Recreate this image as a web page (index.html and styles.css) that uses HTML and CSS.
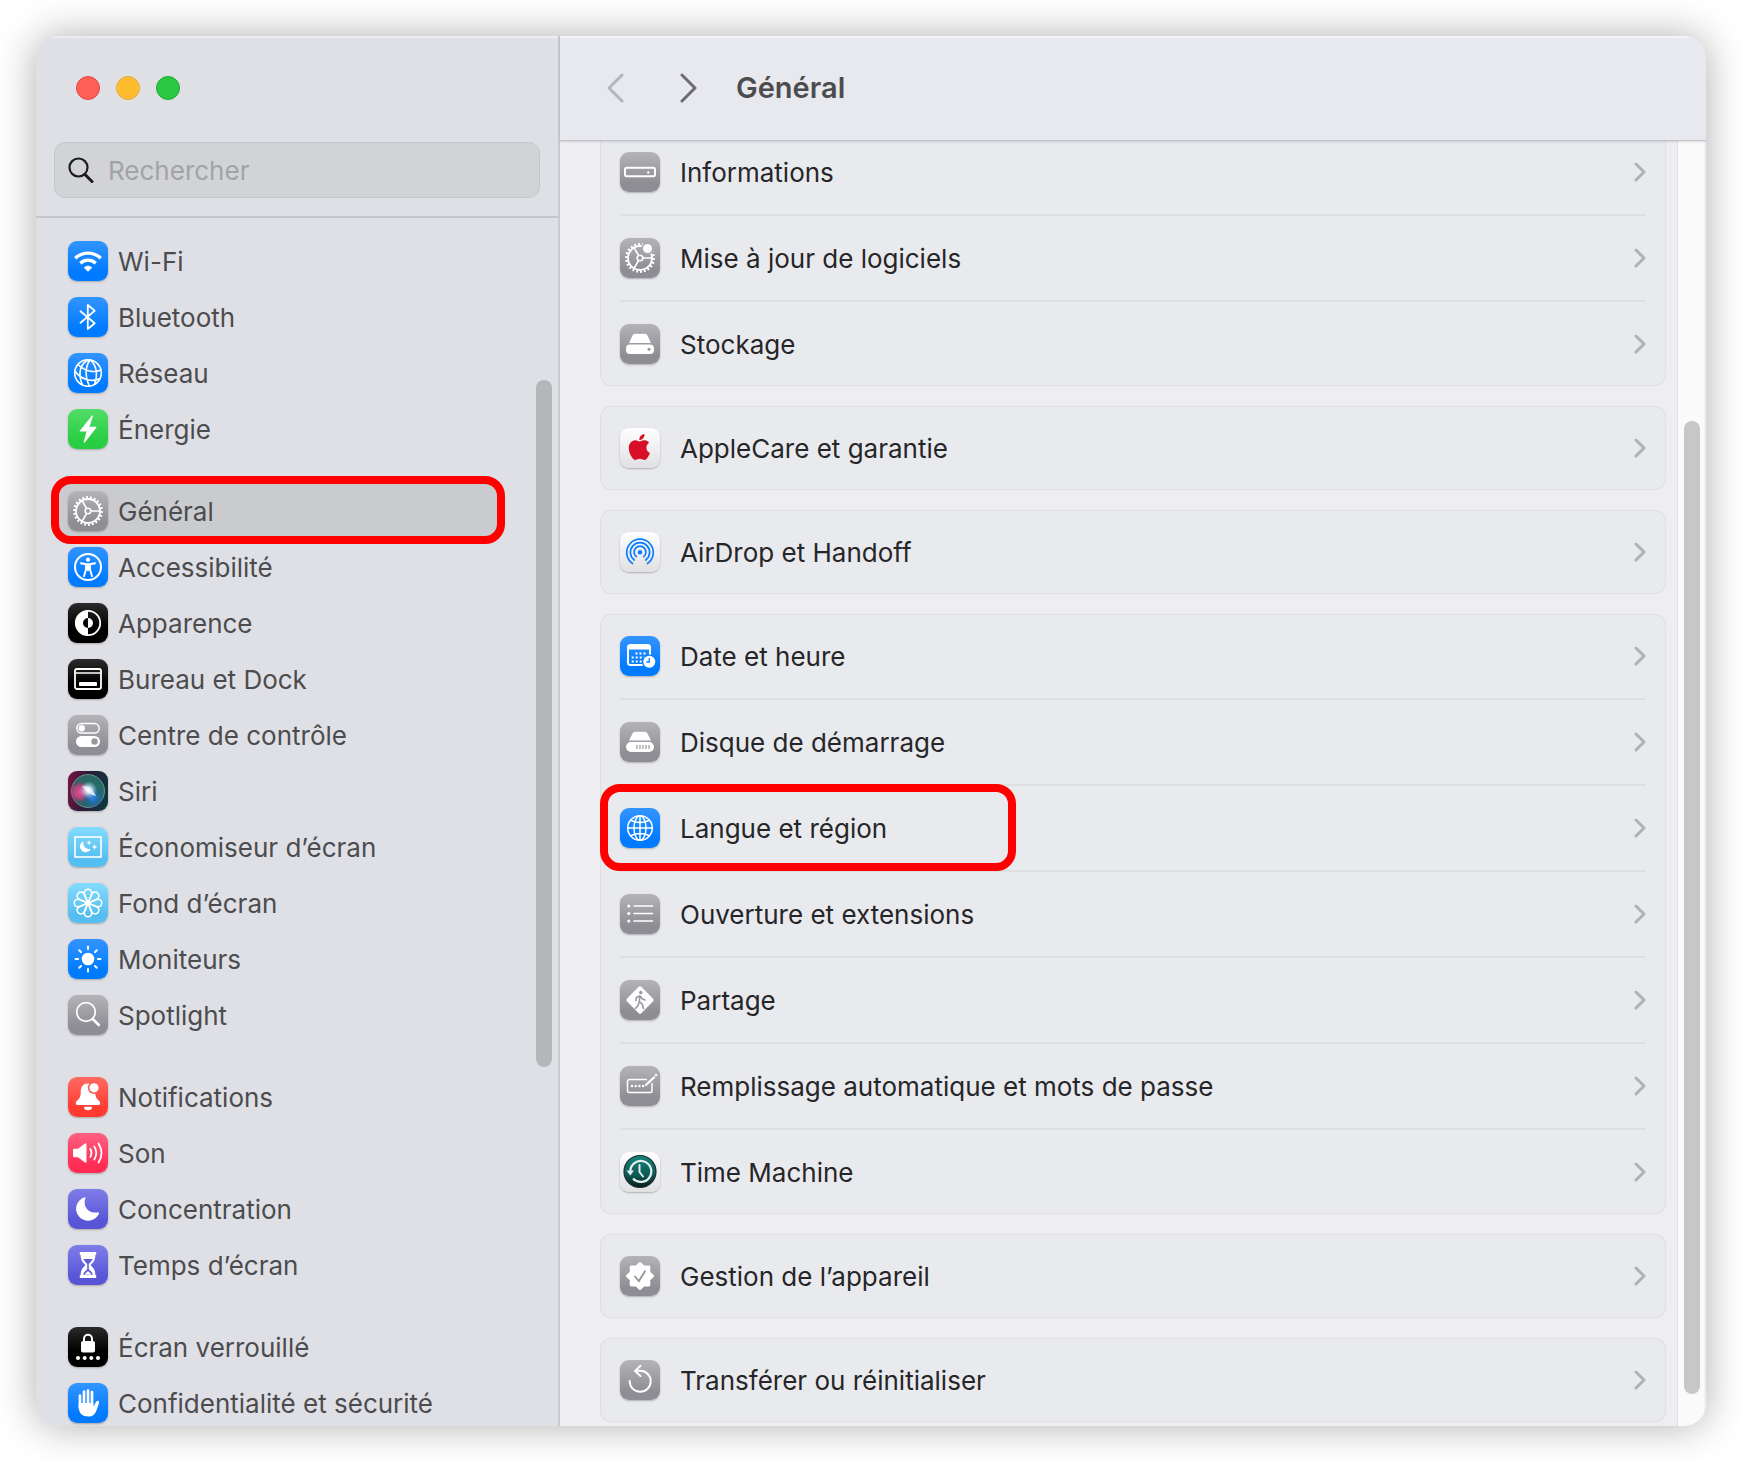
FILE: index.html
```html
<!DOCTYPE html>
<html lang="fr">
<head>
    <meta charset="UTF-8">
    <meta name="viewport" content="width=device-width, initial-scale=1.0">
    <title>Réglages Système - Général</title>
    <link rel="stylesheet" href="styles.css">
</head>
<body>
    <!-- Shared shapes -->
    <svg class="defs" aria-hidden="true">
        <symbol id="chevron" viewBox="0 0 12 20">
            <path d="M2 2l8 8-8 8" fill="none" stroke="currentColor" stroke-width="3" stroke-linecap="round" stroke-linejoin="round"/>
        </symbol>
        <symbol id="gear" viewBox="0 0 40 40">
            <g fill="none" stroke="currentColor">
                <circle cx="20" cy="20" r="13.7" stroke-width="2.4" pathLength="44" stroke-dasharray="1 1"/>
                <circle cx="20" cy="20" r="12" stroke-width="1.8"/>
                <circle cx="20" cy="20" r="2.8" stroke-width="1.6"/>
                <path d="M23 20h9M18.500 17.400L14 9.600M18.500 22.600L14 30.400" stroke-width="1.7"/>
            </g>
        </symbol>
    </svg>

    <div class="window">
        <aside class="sidebar">
            <div class="sidebar-header">
                <div class="traffic-lights">
                    <button class="light close" aria-label="Fermer"></button>
                    <button class="light minimize" aria-label="Réduire"></button>
                    <button class="light zoom" aria-label="Agrandir"></button>
                </div>
                <label class="search">
                    <svg class="search-icon" viewBox="0 0 26 28" aria-hidden="true"><g fill="none" stroke="currentColor" stroke-width="2.2" stroke-linecap="round"><circle cx="10.500" cy="11.500" r="9"/><path d="M17 18.500l7 7" stroke-width="3"/></g></svg>
                    <input type="search" placeholder="Rechercher" aria-label="Rechercher">
                </label>
            </div>

            <nav class="sidebar-body">
                <ul class="nav-group">
                    <li><a class="nav-item" href="#wifi"><svg class="icon blue" viewBox="0 0 40 40"><path d="M7.300 17.200a18.300 18.300 0 0 1 25.400 0M12.300 22.200a11.300 11.300 0 0 1 15.400 0" fill="none" stroke="#fff" stroke-width="3.300"/><path d="M20 30.800l-4.300-4.300q4.300-3.600 8.600 0z" fill="#fff"/></svg><span>Wi-Fi</span></a></li>
                    <li><a class="nav-item" href="#bluetooth"><svg class="icon blue" viewBox="0 0 40 40"><path d="M12.500 14.300L26.700 26.200 19.800 32V8l6.900 5.800L12.500 25.700" fill="none" stroke="#fff" stroke-width="1.800" stroke-linejoin="round" stroke-linecap="round"/></svg><span>Bluetooth</span></a></li>
                    <li><a class="nav-item" href="#reseau"><svg class="icon blue" viewBox="0 0 40 40"><g fill="none" stroke="#fff" stroke-width="1.600"><circle cx="20" cy="20" r="13.300"/><path d="M21 6.700C12 10 9.500 21 14.500 32M22 6.700C17.500 13 16.500 24 21.500 33M22 6.700C28 11.500 30.500 21 26.500 31.500M10 11.500C17 18.500 26 20 33 17M7 18C12 26.500 25 29.500 32 25.500"/></g></svg><span>Réseau</span></a></li>
                    <li><a class="nav-item" href="#energie"><svg class="icon green" viewBox="0 0 40 40"><path d="M24.300 6.300L11.800 21.700q-.6.900.4.900h6.300L15.700 33q.2 1.300 1.300.3L28.300 18.700q.5-1-.5-1h-6.300l3.500-10.800q0-1-.7-.6z" fill="#fff"/></svg><span>Énergie</span></a></li>
                </ul>
                <ul class="nav-group">
                    <li class="annotated"><a class="nav-item selected" href="#general" aria-current="page"><svg class="icon gray" viewBox="0 0 40 40"><use href="#gear"/></svg><span>Général</span></a></li>
                    <li><a class="nav-item" href="#accessibilite"><svg class="icon blue" viewBox="0 0 40 40"><circle cx="20" cy="20" r="13" fill="none" stroke="#fff" stroke-width="2"/><circle cx="20" cy="12.700" r="2.100" fill="#fff"/><path d="M13 16.300l5 .9v5l-2 7M27 16.300l-5 .9v5l2 7M17.700 17.300h4.600M20 18v5" fill="none" stroke="#fff" stroke-width="1.900" stroke-linecap="round" stroke-linejoin="round"/><path d="M17.500 17h5v6.500h-5z" fill="#fff"/></svg><span>Accessibilité</span></a></li>
                    <li><a class="nav-item" href="#apparence"><svg class="icon black" viewBox="0 0 40 40"><circle cx="20" cy="20" r="12.200" fill="none" stroke="#fff" stroke-width="1.800"/><path d="M20 7.500a12.500 12.500 0 0 0 0 25V25a5 5 0 0 1 0-10zM20 15a5 5 0 0 1 0 10z" fill="#fff"/></svg><span>Apparence</span></a></li>
                    <li><a class="nav-item" href="#dock"><svg class="icon black" viewBox="0 0 40 40"><rect x="7" y="10" width="26" height="20" rx="2" fill="none" stroke="#fff" stroke-width="1.800"/><path d="M7 14h26" stroke="#fff" stroke-width="1.400"/><rect x="11" y="23" width="18" height="4" rx="1" fill="#fff"/></svg><span>Bureau et Dock</span></a></li>
                    <li><a class="nav-item" href="#controle"><svg class="icon gray" viewBox="0 0 40 40"><rect x="8.800" y="8.600" width="22.400" height="9.400" rx="4.700" fill="none" stroke="#fff" stroke-width="1.500"/><circle cx="13.700" cy="13.300" r="3.200" fill="#fff"/><rect x="8" y="21" width="24" height="11" rx="5.500" fill="#fff"/><circle cx="26.500" cy="26.500" r="3.200" fill="#98979c"/></svg><span>Centre de contrôle</span></a></li>
                    <li><a class="nav-item" href="#siri"><svg class="icon siri" viewBox="0 0 40 40">
                        <defs>
                            <radialGradient id="siri-core"><stop offset="0" stop-color="#fff"/><stop offset=".35" stop-color="#e6f4ff" stop-opacity=".8"/><stop offset="1" stop-color="#8fd0ff" stop-opacity="0"/></radialGradient>
                            <radialGradient id="siri-blue"><stop offset="0" stop-color="#2a86f0"/><stop offset="1" stop-color="#1a4fb8" stop-opacity="0"/></radialGradient>
                            <radialGradient id="siri-pink"><stop offset="0" stop-color="#ec4f95"/><stop offset=".6" stop-color="#c8407c" stop-opacity=".8"/><stop offset="1" stop-color="#a02a70" stop-opacity="0"/></radialGradient>
                        </defs>
                        <circle cx="20" cy="20" r="16.500" fill="#2a8073" fill-opacity=".75" stroke="#86a9ae" stroke-opacity=".7"/>
                        <circle cx="12" cy="21" r="11" fill="url(#siri-pink)"/>
                        <circle cx="25" cy="27" r="11" fill="url(#siri-blue)"/>
                        <path d="M14 15c8 0 10 3 14 10-8-2-10-5-14-10z" fill="#fff" fill-opacity=".85"/>
                        <circle cx="20.500" cy="19" r="9" fill="url(#siri-core)"/>
                    </svg><span>Siri</span></a></li>
                    <li><a class="nav-item" href="#economiseur"><svg class="icon sky" viewBox="0 0 40 40"><rect x="7" y="10" width="26" height="20" fill="none" stroke="#fff" stroke-width="1.600"/><path d="M15.300 14.300a6.300 6.300 0 0 0 7.500 7.600 5.700 5.700 0 1 1-7.500-7.600z" fill="#fff"/><path d="M21 13l.7 2 2 .7-2 .7-.7 2-.7-2-2-.7 2-.7zM26.500 17l.8 2.200 2.200.8-2.200.8-.8 2.200-.8-2.200-2.200-.8 2.200-.8z" fill="#fff"/></svg><span>Économiseur d’écran</span></a></li>
                    <li><a class="nav-item" href="#fond"><svg class="icon sky" viewBox="0 0 40 40"><g fill="none" stroke="#fff" stroke-width="1.600">
                        <path id="petal" d="M20 19C18.500 16 16.200 13.500 16.200 10a3.800 3.800 0 0 1 7.600 0C23.800 13.500 21.500 16 20 19z"/>
                        <use href="#petal" transform="rotate(45 20 20)"/><use href="#petal" transform="rotate(90 20 20)"/><use href="#petal" transform="rotate(135 20 20)"/><use href="#petal" transform="rotate(180 20 20)"/><use href="#petal" transform="rotate(225 20 20)"/><use href="#petal" transform="rotate(270 20 20)"/><use href="#petal" transform="rotate(315 20 20)"/>
                    </g></svg><span>Fond d’écran</span></a></li>
                    <li><a class="nav-item" href="#moniteurs"><svg class="icon blue" viewBox="0 0 40 40"><circle cx="20" cy="20" r="6.300" fill="#fff"/><path d="M20 7.500v2.600M20 29.900v2.600M7.500 20h2.600M29.900 20h2.600M11.200 11.200l1.800 1.800M27 27l1.800 1.800M28.800 11.200L27 13M13 27l-1.800 1.800" stroke="#fff" stroke-width="2" stroke-linecap="round"/></svg><span>Moniteurs</span></a></li>
                    <li><a class="nav-item" href="#spotlight"><svg class="icon gray" viewBox="0 0 40 40"><g fill="none" stroke="#fff" stroke-linecap="round"><circle cx="18" cy="17" r="9.300" stroke-width="1.700"/><path d="M24.800 24l6 6" stroke-width="2.500"/></g></svg><span>Spotlight</span></a></li>
                </ul>
                <ul class="nav-group">
                    <li><a class="nav-item" href="#notifications"><svg class="icon red" viewBox="0 0 40 40"><path d="M20 6.500c-4.500 0-7.200 3.200-7.200 7.500 0 6-1.300 7.500-3.800 9.700-2 2.100-1.200 4.300 1 4.300h20c2.200 0 3-2.200 1-4.300-2.500-2.200-3.800-3.700-3.800-9.700 0-4.300-2.700-7.500-7.200-7.500zM16 29.800h8a4 3.500 0 0 1-8 0z" fill="#fff"/><circle cx="26" cy="10.800" r="6.200" fill="#ff5c53"/><circle cx="26" cy="10.800" r="4.600" fill="#fff"/></svg><span>Notifications</span></a></li>
                    <li><a class="nav-item" href="#son"><svg class="icon pink" viewBox="0 0 40 40"><path d="M6 15.800q-1 .2-1 1.200v6q0 1 1 1.200h4l7 5.200q1.500.7 1.500-.7V11.300q0-1.400-1.500-.7l-7 5.200z" fill="#fff"/><path d="M22.300 16q2.300 4 0 8M26.300 13.500q4 6.500 0 13M30.500 10.500q6 9.500 0 19" fill="none" stroke="#fff" stroke-width="1.800" stroke-linecap="round"/></svg><span>Son</span></a></li>
                    <li><a class="nav-item" href="#concentration"><svg class="icon indigo" viewBox="0 0 40 40"><path d="M16.500 8.300c.8-.3 1.200.1.900.9-3 8.300 3.200 15.800 12.800 14.200.9-.1 1.200.4.900 1.200A12 12 0 1 1 16.500 8.300z" fill="#fff"/></svg><span>Concentration</span></a></li>
                    <li><a class="nav-item" href="#temps"><svg class="icon indigo" viewBox="0 0 40 40"><path d="M12.500 7h15q.8 0 .8.900v1q0 .8-1 1C27.300 15.500 25.500 17 22.500 20c3 3 4.800 4.500 4.800 10.100q1 .2 1 1v1q0 .9-.8.900h-15q-.8 0-.8-.9v-1q0-.8 1-1C12.700 24.500 14.500 23 17.500 20c-3-3-4.800-4.500-4.800-10.100q-1-.2-1-1v-1q0-.9.800-.9z" fill="#fff"/><path d="M15.200 14h9.600q-1.500 2.500-4 5v4.500q0 1 1 1.700 2.500 1.500 3.200 4.500h-10q.7-3 3.200-4.500 1-.7 1-1.700V19q-2.500-2.500-4-5z" fill="#6260d9"/><path d="M20 26l3.600 3.500h-7.200z" fill="#fff"/></svg><span>Temps d’écran</span></a></li>
                </ul>
                <ul class="nav-group">
                    <li><a class="nav-item" href="#verrouille"><svg class="icon black" viewBox="0 0 40 40"><rect x="13" y="14" width="14" height="11.500" rx="2" fill="#fff"/><path d="M16 15v-3.300a4 4 0 0 1 8 0V15" fill="none" stroke="#fff" stroke-width="2"/><g fill="#fff"><circle cx="10" cy="31" r="2"/><circle cx="16.700" cy="31" r="2"/><circle cx="23.300" cy="31" r="2"/><circle cx="30" cy="31" r="2"/></g></svg><span>Écran verrouillé</span></a></li>
                    <li><a class="nav-item" href="#confidentialite"><svg class="icon blue" viewBox="0 0 40 40"><path d="M12 12.500V25M16 8.500V22M20 7.500V22M24 9V22" stroke="#fff" stroke-width="2.700" stroke-linecap="round"/><path d="M10.650 20h14.700v3.500q1.200-1.200 2.400-4.200.8-1.900 2.400-1.600 1.500.5.900 2.300l-2.500 7.200C27 31.500 24.500 33.500 20.500 33.500c-6 0-9.850-3-9.850-10z" fill="#fff"/></svg><span>Confidentialité et sécurité</span></a></li>
                </ul>
            </nav>
            <div class="sidebar-thumb"></div>
        </aside>

        <main class="content">
            <header class="toolbar">
                <button class="nav-button back" aria-label="Précédent" disabled><svg viewBox="0 0 18 30"><path d="M16 2L3 15l13 13"/></svg></button>
                <button class="nav-button" aria-label="Suivant"><svg viewBox="0 0 18 30"><path d="M2 2l13 13L2 28"/></svg></button>
                <h1>Général</h1>
            </header>

            <div class="pane">
                <div class="cards">
                    <ul class="card">
                        <li><a class="row" href="#informations"><svg class="icon gray" viewBox="0 0 40 40"><rect x="5" y="15.800" width="30" height="8.400" rx="1.800" fill="none" stroke="#fff" stroke-width="2"/><circle cx="28.300" cy="20.500" r="1.200" fill="#fff"/></svg><span>Informations</span><svg class="chevron"><use href="#chevron"/></svg></a></li>
                        <li><a class="row" href="#mise-a-jour"><svg class="icon gray" viewBox="0 0 40 40"><use href="#gear"/><circle cx="27.500" cy="10.500" r="6.300" fill="#a9a8ad"/><circle cx="27.500" cy="10.500" r="4.500" fill="#fff"/></svg><span>Mise à jour de logiciels</span><svg class="chevron"><use href="#chevron"/></svg></a></li>
                        <li><a class="row" href="#stockage"><svg class="icon gray" viewBox="0 0 40 40"><path d="M12.500 11.500q.7-1.700 2.500-1.700h10q1.800 0 2.500 1.700L31 19H9zM10 20.500h20a4 4 0 0 1 4 4v1.500a4 4 0 0 1-4 4H10a4 4 0 0 1-4-4v-1.500a4 4 0 0 1 4-4z" fill="#fff"/><circle cx="29" cy="25.300" r="1.500" fill="#98979c"/></svg><span>Stockage</span><svg class="chevron"><use href="#chevron"/></svg></a></li>
                    </ul>

                    <ul class="card">
                        <li><a class="row" href="#applecare"><svg class="icon white" viewBox="0 0 40 40"><path transform="translate(6.400 6) scale(1.080)" d="M12.152 6.896c-.948 0-2.415-1.078-3.960-1.040-2.040.027-3.910 1.183-4.961 3.014-2.117 3.675-.546 9.103 1.519 12.090 1.013 1.454 2.208 3.090 3.792 3.039 1.520-.065 2.090-.987 3.935-.987 1.831 0 2.350.987 3.960.948 1.637-.026 2.676-1.480 3.676-2.948 1.156-1.688 1.636-3.325 1.662-3.415-.039-.013-3.182-1.221-3.220-4.857-.026-3.040 2.480-4.494 2.597-4.559-1.429-2.090-3.623-2.324-4.390-2.376-2-.156-3.675 1.090-4.610 1.090zM15.530 3.830c.843-1.012 1.400-2.427 1.245-3.830-1.207.052-2.662.805-3.532 1.818-.780.896-1.454 2.338-1.273 3.714 1.338.104 2.715-.688 3.559-1.701" fill="#d70f26"/></svg><span>AppleCare et garantie</span><svg class="chevron"><use href="#chevron"/></svg></a></li>
                    </ul>

                    <ul class="card">
                        <li><a class="row" href="#airdrop"><svg class="icon white" viewBox="0 0 40 40"><g fill="none" stroke="#0a7cff" stroke-width="1.700" stroke-linecap="round"><path d="M12.500 31.500a13.300 13.300 0 1 1 15 0M14.300 28a9.600 9.600 0 1 1 11.400 0M16.300 24.700a5.900 5.900 0 1 1 7.400 0"/></g><circle cx="20" cy="20.300" r="2.200" fill="#0a7cff"/></svg><span>AirDrop et Handoff</span><svg class="chevron"><use href="#chevron"/></svg></a></li>
                    </ul>

                    <ul class="card">
                        <li><a class="row" href="#date"><svg class="icon blue" viewBox="0 0 40 40"><rect x="8" y="9" width="22" height="20" rx="2.500" fill="none" stroke="#fff" stroke-width="2"/><path d="M8 9h22v4.500H8z" fill="#fff"/><path d="M15.500 17.500h11.500M11.700 21.500h15M11.700 25.500h11" stroke="#fff" stroke-width="2" stroke-dasharray="2 2"/><circle cx="29.300" cy="25.800" r="7.300" fill="#0b80ff"/><circle cx="29.300" cy="25.800" r="6" fill="#fff"/><path d="M29.300 22v4h-3" fill="none" stroke="#0b80ff" stroke-width="1.300"/></svg><span>Date et heure</span><svg class="chevron"><use href="#chevron"/></svg></a></li>
                        <li><a class="row" href="#disque"><svg class="icon gray" viewBox="0 0 40 40"><path d="M12.500 11.500q.7-1.700 2.500-1.700h10q1.800 0 2.500 1.700L31 18.500H9zM11 20h18a5 5 0 0 1 0 10H11a5 5 0 0 1 0-10z" fill="#fff"/><path d="M17 23v4M20 23v4M23 23v4M26 23v4M29 23v4" stroke="#98979c" stroke-width="1.200"/></svg><span>Disque de démarrage</span><svg class="chevron"><use href="#chevron"/></svg></a></li>
                        <li class="annotated"><a class="row" href="#langue"><svg class="icon blue" viewBox="0 0 40 40"><g fill="none" stroke="#fff" stroke-width="1.500"><circle cx="20" cy="20" r="12.300"/><ellipse cx="20" cy="20" rx="6" ry="12.300"/><path d="M20 7.700v24.600M7.700 20h24.600M10.500 12.300q9.500 4.500 19 0M10.500 27.700q9.500-4.500 19 0"/></g></svg><span>Langue et région</span><svg class="chevron"><use href="#chevron"/></svg></a></li>
                        <li><a class="row" href="#ouverture"><svg class="icon gray" viewBox="0 0 40 40"><g fill="#fff"><circle cx="8.800" cy="12" r="1.600"/><circle cx="8.800" cy="19.500" r="1.600"/><circle cx="8.800" cy="27" r="1.600"/></g><path d="M14 12h18.500M14 19.500h18.500M14 27h18.500" stroke="#fff" stroke-width="1.600" stroke-linecap="round"/></svg><span>Ouverture et extensions</span><svg class="chevron"><use href="#chevron"/></svg></a></li>
                        <li><a class="row" href="#partage"><svg class="icon gray" viewBox="0 0 40 40"><rect x="9.800" y="9.800" width="20.400" height="20.400" rx="1.800" fill="#fff" transform="rotate(45 20 20)"/><circle cx="20.800" cy="12.500" r="1.700" fill="#98979c"/><path d="M20 16l-.7 5.500 3 2.700 1.200 4.300M19.300 22l-1.300 3.500-2.500 3M19.500 16l-3 1.500-.7 3M20.500 16.500l2 2.500 2.500 1" fill="none" stroke="#98979c" stroke-width="1.600" stroke-linecap="round" stroke-linejoin="round"/></svg><span>Partage</span><svg class="chevron"><use href="#chevron"/></svg></a></li>
                        <li><a class="row" href="#remplissage"><svg class="icon gray" viewBox="0 0 40 40"><path d="M27 13.500H9.500q-2 0-2 2v9q0 2 2 2h20.500q2 0 2-2V17" fill="none" stroke="#fff" stroke-width="1.500"/><g fill="#fff"><circle cx="12" cy="20" r="1.200"/><circle cx="15.700" cy="20" r="1.200"/><circle cx="19.400" cy="20" r="1.200"/><circle cx="23.100" cy="20" r="1.200"/></g><path d="M24.500 20.500l1-2.800L34 10l1.500 1.500L27.200 19.300z" fill="#fff"/><circle cx="36" cy="9" r="1.300" fill="#fff"/></svg><span>Remplissage automatique et mots de passe</span><svg class="chevron"><use href="#chevron"/></svg></a></li>
                        <li><a class="row" href="#time-machine"><svg class="icon white" viewBox="0 0 40 40">
                            <defs><linearGradient id="tm" x2="0" y2="1"><stop offset="0" stop-color="#12857a"/><stop offset=".6" stop-color="#0d5b56"/><stop offset="1" stop-color="#061a1c"/></linearGradient></defs>
                            <circle cx="20" cy="19.500" r="16" fill="url(#tm)" stroke="#1e2c30" stroke-width="1.200"/>
                            <path d="M10.300 20A10.500 10.500 0 1 1 13 26.500" fill="none" stroke="#e6eeee" stroke-width="2.200"/>
                            <path d="M6.500 18.500h7.500l-3.700 5z" fill="#e6eeee"/>
                            <path d="M19.500 13v7l3.500 4.500" fill="none" stroke="#e6eeee" stroke-width="2" stroke-linecap="round"/>
                        </svg><span>Time Machine</span><svg class="chevron"><use href="#chevron"/></svg></a></li>
                    </ul>

                    <ul class="card">
                        <li><a class="row" href="#gestion"><svg class="icon gray" viewBox="0 0 40 40"><path d="M20 7.500l3.600 3.600 5.200-.1-.1 5.200L32.500 20l-3.800 3.800.1 5.200-5.200-.1L20 32.500l-3.600-3.600-5.200.1.100-5.200L7.500 20l3.800-3.800-.1-5.200 5.200.1z" fill="#fff" stroke="#fff" stroke-width="3" stroke-linejoin="round"/><path d="M15 20.500l3.800 4.700 6.200-10" fill="none" stroke="#98979c" stroke-width="1.900" stroke-linecap="round" stroke-linejoin="round"/></svg><span>Gestion de l’appareil</span><svg class="chevron"><use href="#chevron"/></svg></a></li>
                    </ul>

                    <ul class="card">
                        <li><a class="row" href="#transferer"><svg class="icon gray" viewBox="0 0 40 40"><path d="M9.700 21A10.500 10.500 0 1 0 20 10.800h-4M20.500 5.800L15 11l5.500 5" fill="none" stroke="#fff" stroke-width="1.900" stroke-linecap="round" stroke-linejoin="round"/></svg><span>Transférer ou réinitialiser</span><svg class="chevron"><use href="#chevron"/></svg></a></li>
                    </ul>
                </div>
                <div class="scroll-track"><div class="scroll-thumb"></div></div>
            </div>
        </main>
    </div>
</body>
</html>
```
FILE: styles.css
```css
* {
    box-sizing: border-box;
}
body {
    margin: 0;
    height: 100vh;
    padding: 36px;
    background: #fff;
    font-family: Inter, "Liberation Sans", sans-serif;
    font-size: 26px;
    line-height: 32px;
    color: #262628;
    overflow: hidden;
}
ul {
    list-style: none;
    margin: 0;
    padding: 0;
}
a {
    color: inherit;
    text-decoration: none;
}
.defs {
    position: absolute;
    width: 0;
    height: 0;
}
.window {
    display: flex;
    height: 100%;
    border-radius: 22px;
    overflow: hidden;
    background: #eeedf1;
    box-shadow: 0 0 40px rgba(0,0,0,0.32);
}

/* Sidebar */
.sidebar {
    position: relative;
    display: flex;
    flex-direction: column;
    flex: 0 0 524px;
    background: #dfe0e5;
    border-right: 2px solid #c9cace;
    box-shadow: inset 0 2px 0 #ecedf0;
}
.sidebar-header {
    flex: none;
    padding: 40px 18px 18px;
    border-bottom: 2px solid #c4c5ca;
}
.traffic-lights {
    display: flex;
    gap: 16px;
    padding: 0 22px;
    margin-bottom: 42px;
}
.light {
    width: 24px;
    height: 24px;
    padding: 0;
    border: 1px solid;
    border-radius: 50%;
}
.close {
    background: #ff5f57;
    border-color: #e24640;
}
.minimize {
    background: #febc2e;
    border-color: #e9ad34;
}
.zoom {
    background: #28c840;
    border-color: #1faa31;
}
.search {
    display: flex;
    align-items: center;
    gap: 14px;
    height: 56px;
    padding: 0 13px;
    background: #d2d3d6;
    border: 1px solid #c6c7ca;
    border-radius: 11px;
}
.search-icon {
    flex: none;
    width: 26px;
    height: 28px;
    color: #1c1c1e;
}
.search input {
    flex: 1;
    min-width: 0;
    padding: 2px 0 0;
    border: 0;
    outline: 0;
    background: transparent;
    font: inherit;
}
.search input::placeholder {
    color: #a2a3a7;
    opacity: 1;
}
.sidebar-body {
    flex: 1;
    min-height: 0;
    overflow: hidden;
    padding: 15px 60px 0 20px;
}
.nav-group + .nav-group {
    margin-top: 26px;
}
.nav-item {
    display: flex;
    align-items: center;
    gap: 10px;
    height: 56px;
    padding: 0 12px;
    border-radius: 10px;
    color: #4c4c4f;
    white-space: nowrap;
}
.nav-item span,
.row span {
    padding-top: 2px;
}
.nav-item.selected {
    background: #cacbce;
}
.sidebar-thumb {
    position: absolute;
    top: 344px;
    right: 6px;
    width: 16px;
    height: 49.4%;
    border-radius: 8px;
    background: #b5b6ba;
}

/* Icon tiles */
.icon {
    flex: none;
    width: 40px;
    height: 40px;
    border-radius: 9px;
    color: #fff;
    box-shadow: 0 1px 2px rgba(0,0,0,0.25);
}
.blue {
    background: linear-gradient(#3395ff, #007aff 80%);
}
.green {
    background: linear-gradient(#53dd69, #28cd41 80%);
}
.gray {
    background: linear-gradient(#b4b3b8, #8e8d93 80%);
}
.black {
    background: linear-gradient(#2b2b2b, #000 60%);
}
.sky {
    background: linear-gradient(#84dcfd, #55bef0 80%);
}
.red {
    background: linear-gradient(#ff6a61, #ff3b30 80%);
}
.pink {
    background: linear-gradient(#ff6083, #ff2d55 80%);
}
.indigo {
    background: linear-gradient(#7f7de9, #5856d6 80%);
}
.white {
    background: linear-gradient(#fff, #e0e0e2);
}
.siri {
    background: linear-gradient(100deg, #7a1240, #2c1c38 45%, #0a3a3e);
}

/* Red frames around the steps of the guide */
.annotated {
    position: relative;
}
.annotated::after {
    content: "";
    position: absolute;
    inset: -7px -7px -5px -5px;
    border: 8px solid #fe0000;
    border-radius: 20px;
    pointer-events: none;
}
.card .annotated::after {
    inset: 0 auto -1px 0;
    width: 400px;
}

/* Content */
.content {
    display: flex;
    flex-direction: column;
    flex: 1;
    min-width: 0;
}
.toolbar {
    position: relative;
    z-index: 1;
    display: flex;
    align-items: center;
    flex: none;
    height: 105px;
    padding: 0 46px;
    background: #e8e9ee;
    border-bottom: 1px solid #c2c3c8;
    box-shadow: inset 0 2px 0 #f4f4f7, 0 1px 2px rgba(0,0,0,0.12);
}
.nav-button {
    width: 18px;
    height: 30px;
    margin-right: 56px;
    padding: 0;
    border: 0;
    background: none;
    color: #6c6c70;
}
.nav-button + .nav-button {
    margin-right: 38px;
}
.nav-button svg {
    display: block;
    width: 18px;
    height: 30px;
    fill: none;
    stroke: currentColor;
    stroke-width: 3;
    stroke-linecap: round;
    stroke-linejoin: round;
}
.back {
    color: #b5b6ba;
}
h1 {
    margin: 0;
    font-size: 29px;
    font-weight: 600;
    color: #4c4c4f;
}
.pane {
    display: flex;
    flex: 1;
    min-height: 0;
}
/* scrolled to the end: the first card runs under the toolbar */
.cards {
    display: flex;
    flex-direction: column;
    justify-content: flex-end;
    gap: 20px;
    flex: 1;
    min-width: 0;
    overflow: hidden;
    padding: 0 11px 4px 40px;
}
.card {
    flex: none;
    background: #e9eaee;
    border-radius: 11px;
    box-shadow: inset 0 0 0 1px #dfdfe4;
}
.row {
    display: flex;
    align-items: center;
    gap: 20px;
    height: 84px;
    margin: 0 20px;
}
.card li + li .row {
    height: 86px;
    border-top: 2px solid #dedfe3;
}
.row span {
    flex: 1;
}
.chevron {
    flex: none;
    width: 12px;
    height: 20px;
    color: #b0b1b5;
}
.scroll-track {
    flex: 0 0 29px;
    padding: 280px 4px 32px 6px;
    background: #fafafa;
    border-left: 1px solid #e2e2e4;
    border-right: 2px solid #f0f0f1;
}
.scroll-thumb {
    height: 100%;
    border-radius: 8px;
    background: #c7c7c7;
}
```
